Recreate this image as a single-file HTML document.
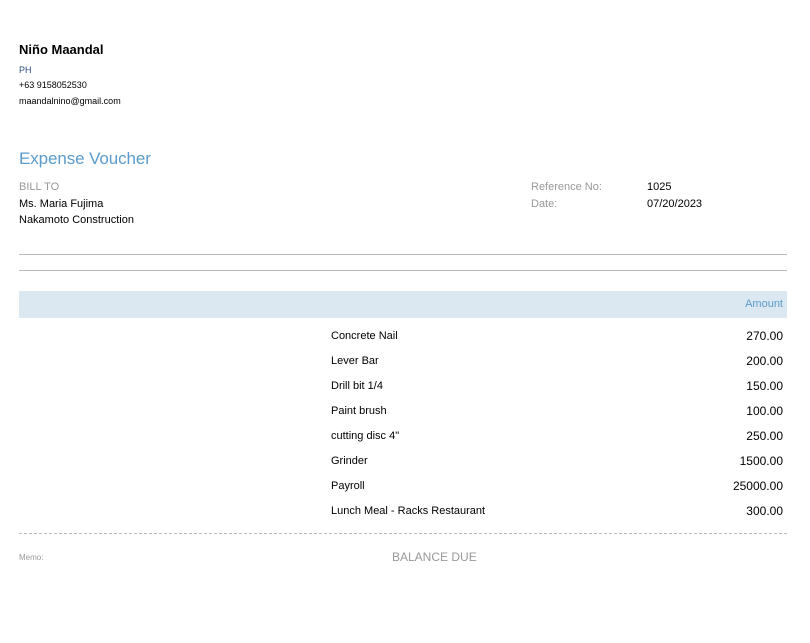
<!DOCTYPE html>
<html><head><style>
body{margin:0;width:810px;height:643px;background:#fff;font-family:"Liberation Sans",Arial,sans-serif;position:relative;overflow:hidden}
.a{position:absolute;white-space:nowrap}
.row{position:absolute;left:331px;width:452px;font-size:11px;color:#000;padding-top:1px}
.row span{position:absolute;right:0;top:0;font-size:12px}
</style></head><body>
<div class="a" style="left:19px;top:42px;font-size:13px;font-weight:bold">Niño Maandal</div>
<div class="a" style="left:19px;top:65px;font-size:9px;color:#2a4d7a">PH</div>
<div class="a" style="left:19px;top:80px;font-size:9px">+63 9158052530</div>
<div class="a" style="left:19px;top:96px;font-size:9px">maandalnino@gmail.com</div>
<div class="a" style="left:19px;top:149px;font-size:17px;color:#5a9bcc;letter-spacing:-0.1px">Expense Voucher</div>
<div class="a" style="left:19px;top:181px;font-size:11px;color:#999">BILL TO</div>
<div class="a" style="left:19px;top:198px;font-size:11px">Ms. Maria Fujima</div>
<div class="a" style="left:19px;top:214px;font-size:11px">Nakamoto Construction</div>
<div class="a" style="left:531px;top:181px;font-size:11px;color:#999">Reference No:</div>
<div class="a" style="left:531px;top:198px;font-size:11px;color:#999">Date:</div>
<div class="a" style="left:647px;top:181px;font-size:11px">1025</div>
<div class="a" style="left:647px;top:198px;font-size:11px">07/20/2023</div>
<div class="a" style="left:19px;top:254px;width:768px;border-top:1px solid #bbb"></div>
<div class="a" style="left:19px;top:270px;width:768px;border-top:1px solid #bbb"></div>
<div class="a" style="left:19px;top:291px;width:768px;height:27px;background:#dce8f1"></div>
<div class="a" style="right:27px;top:298px;font-size:11px;color:#5a9bcc">Amount</div>
<div class="row" style="top:329px">Concrete Nail<span>270.00</span></div>
<div class="row" style="top:354px">Lever Bar<span>200.00</span></div>
<div class="row" style="top:379px">Drill bit 1/4<span>150.00</span></div>
<div class="row" style="top:404px">Paint brush<span>100.00</span></div>
<div class="row" style="top:429px">cutting disc 4"<span>250.00</span></div>
<div class="row" style="top:454px">Grinder<span>1500.00</span></div>
<div class="row" style="top:479px">Payroll<span>25000.00</span></div>
<div class="row" style="top:504px">Lunch Meal - Racks Restaurant<span>300.00</span></div>
<div class="a" style="left:19px;top:533px;width:768px;border-top:1px dashed #bbb"></div>
<div class="a" style="left:19px;top:553px;font-size:8px;color:#999">Memo:</div>
<div class="a" style="left:392px;top:550px;font-size:12px;color:#999">BALANCE DUE</div>
</body></html>
